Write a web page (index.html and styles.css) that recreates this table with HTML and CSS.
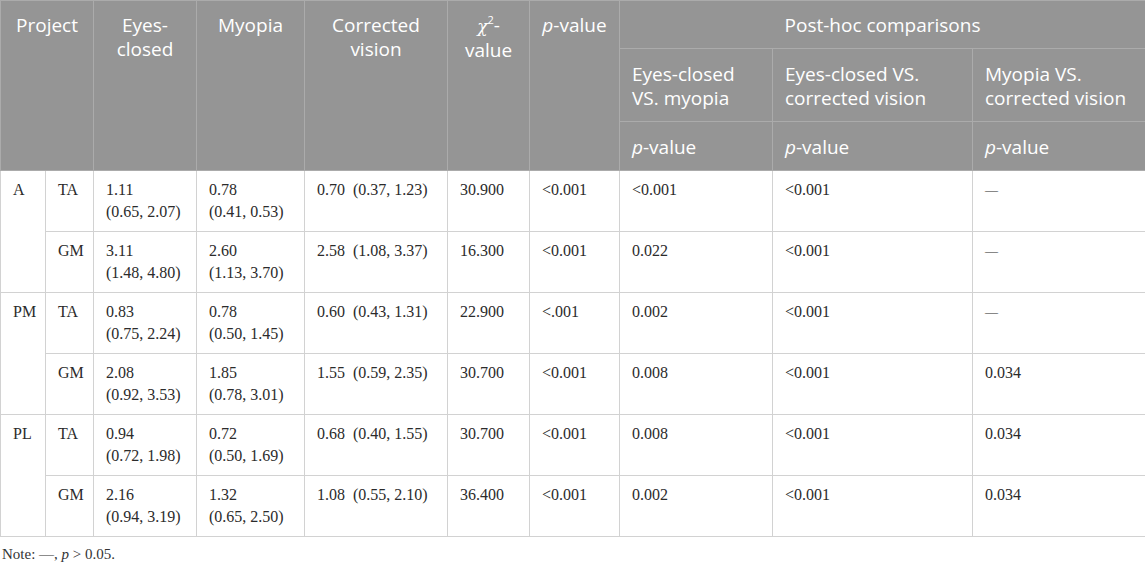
FILE: index.html
```html
<!DOCTYPE html>
<html>
<head>
<meta charset="utf-8">
<link rel="stylesheet" href="styles.css">
</head>
<body>
<table class="data">
  <colgroup>
    <col class="c1"><col class="c2"><col class="c3"><col class="c4"><col class="c5">
    <col class="c6"><col class="c7"><col class="c8"><col class="c9"><col class="c10">
  </colgroup>
  <thead>
    <tr class="h1">
      <th colspan="2" rowspan="3" class="ctr">Project</th>
      <th rowspan="3" class="ctr">Eyes-<br>closed</th>
      <th rowspan="3" class="ctr">Myopia</th>
      <th rowspan="3" class="ctr">Corrected<br>vision</th>
      <th rowspan="3" class="ctr"><i class="chi">χ</i><sup>2</sup>-<br>value</th>
      <th rowspan="3" class="ctr"><i>p</i>-value</th>
      <th colspan="3" class="ctr">Post-hoc comparisons</th>
    </tr>
    <tr class="h2">
      <th>Eyes-closed<br>VS. myopia</th>
      <th>Eyes-closed VS.<br>corrected vision</th>
      <th>Myopia VS.<br>corrected vision</th>
    </tr>
    <tr class="h3">
      <th><i>p</i>-value</th>
      <th><i>p</i>-value</th>
      <th><i>p</i>-value</th>
    </tr>
  </thead>
  <tbody>
    <tr>
      <td rowspan="2">A</td><td>TA</td>
      <td>1.11<br>(0.65, 2.07)</td><td>0.78<br>(0.41, 0.53)</td><td>0.70&#8194;(0.37, 1.23)</td>
      <td>30.900</td><td>&lt;0.001</td><td>&lt;0.001</td><td>&lt;0.001</td><td class="dash">—</td>
    </tr>
    <tr>
      <td>GM</td>
      <td>3.11<br>(1.48, 4.80)</td><td>2.60<br>(1.13, 3.70)</td><td>2.58&#8194;(1.08, 3.37)</td>
      <td>16.300</td><td>&lt;0.001</td><td>0.022</td><td>&lt;0.001</td><td class="dash">—</td>
    </tr>
    <tr>
      <td rowspan="2">PM</td><td>TA</td>
      <td>0.83<br>(0.75, 2.24)</td><td>0.78<br>(0.50, 1.45)</td><td>0.60&#8194;(0.43, 1.31)</td>
      <td>22.900</td><td>&lt;.001</td><td>0.002</td><td>&lt;0.001</td><td class="dash">—</td>
    </tr>
    <tr>
      <td>GM</td>
      <td>2.08<br>(0.92, 3.53)</td><td>1.85<br>(0.78, 3.01)</td><td>1.55&#8194;(0.59, 2.35)</td>
      <td>30.700</td><td>&lt;0.001</td><td>0.008</td><td>&lt;0.001</td><td>0.034</td>
    </tr>
    <tr>
      <td rowspan="2">PL</td><td>TA</td>
      <td>0.94<br>(0.72, 1.98)</td><td>0.72<br>(0.50, 1.69)</td><td>0.68&#8194;(0.40, 1.55)</td>
      <td>30.700</td><td>&lt;0.001</td><td>0.008</td><td>&lt;0.001</td><td>0.034</td>
    </tr>
    <tr>
      <td>GM</td>
      <td>2.16<br>(0.94, 3.19)</td><td>1.32<br>(0.65, 2.50)</td><td>1.08&#8194;(0.55, 2.10)</td>
      <td>36.400</td><td>&lt;0.001</td><td>0.002</td><td>&lt;0.001</td><td>0.034</td>
    </tr>
  </tbody>
</table>
<p class="note">Note: —, <i>p</i> &gt; 0.05.</p>
</body>
</html>
```

FILE: styles.css
```css
html, body {
  margin: 0;
  padding: 0;
  background: #ffffff;
}

.data {
  border-collapse: collapse;
  table-layout: fixed;
  width: 1145px;
}

.c1 { width: 45px; }
.c2 { width: 48px; }
.c3 { width: 103px; }
.c4 { width: 108px; }
.c5 { width: 143px; }
.c6 { width: 82px; }
.c7 { width: 90px; }
.c8 { width: 153px; }
.c9 { width: 200px; }
.c10 { width: 173px; }

.data th {
  background: #959595;
  color: #ffffff;
  font-family: "Open Sans", "Noto Sans", sans-serif;
  font-weight: normal;
  font-size: 19px;
  line-height: 24px;
  text-align: left;
  vertical-align: top;
  padding: 13px 10px 11px 12px;
  border: 1px solid #ababab;
}

.data .h1 th {
  padding-top: 12px;
}

.data th.ctr {
  text-align: center;
  padding-left: 6px;
  padding-right: 6px;
}

.data th sup {
  font-size: 11px;
  line-height: 0;
  vertical-align: 8px;
}

.chi {
  font-family: "DejaVu Serif", "Liberation Serif", serif;
  font-size: 17px;
}

.data td {
  font-family: "Liberation Serif", "Times New Roman", serif;
  font-size: 16px;
  line-height: 22px;
  color: #2b2b2b;
  vertical-align: top;
  padding: 8px 8px 8px 12px;
  border: 1px solid #d2d2d2;
}

.data td.dash {
  font-size: 13px;
}

.data tbody tr:first-child td {
  border-top-color: #bdbdbd;
}

.note {
  margin: 8px 0 0 2px;
  font-family: "Liberation Serif", "Times New Roman", serif;
  font-size: 15px;
  line-height: 18px;
  color: #333333;
}
```
